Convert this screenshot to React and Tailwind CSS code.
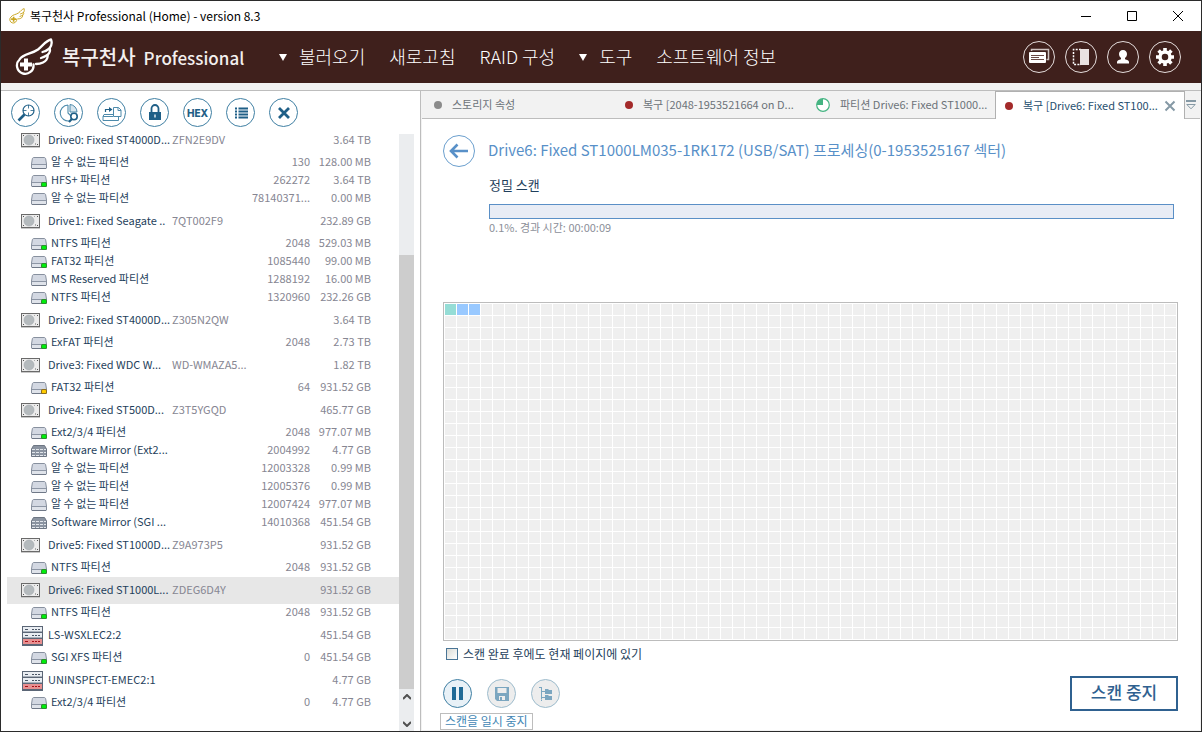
import React from "react";

const DRIVES = [
  { name: "Drive0: Fixed ST4000D...", serial: "ZFN2E9DV", size: "3.64 TB", parts: [
    ["plain", "알 수 없는 파티션", "130", "128.00 MB"],
    ["green", "HFS+ 파티션", "262272", "3.64 TB"],
    ["plain", "알 수 없는 파티션", "78140371...", "0.00 MB"],
  ] },
  { name: "Drive1: Fixed Seagate ..", serial: "7QT002F9", size: "232.89 GB", parts: [
    ["green", "NTFS 파티션", "2048", "529.03 MB"],
    ["green", "FAT32 파티션", "1085440", "99.00 MB"],
    ["plain", "MS Reserved 파티션", "1288192", "16.00 MB"],
    ["green", "NTFS 파티션", "1320960", "232.26 GB"],
  ] },
  { name: "Drive2: Fixed ST4000D...", serial: "Z305N2QW", size: "3.64 TB", parts: [
    ["green", "ExFAT 파티션", "2048", "2.73 TB"],
  ] },
  { name: "Drive3: Fixed WDC W...", serial: "WD-WMAZA5...", size: "1.82 TB", parts: [
    ["yellow", "FAT32 파티션", "64", "931.52 GB"],
  ] },
  { name: "Drive4: Fixed ST500D...", serial: "Z3T5YGQD", size: "465.77 GB", parts: [
    ["green", "Ext2/3/4 파티션", "2048", "977.07 MB"],
    ["mirror", "Software Mirror (Ext2...", "2004992", "4.77 GB"],
    ["plain", "알 수 없는 파티션", "12003328", "0.99 MB"],
    ["plain", "알 수 없는 파티션", "12005376", "0.99 MB"],
    ["plain", "알 수 없는 파티션", "12007424", "977.07 MB"],
    ["mirror", "Software Mirror (SGI ...", "14010368", "451.54 GB"],
  ] },
  { name: "Drive5: Fixed ST1000D...", serial: "Z9A973P5", size: "931.52 GB", parts: [
    ["green", "NTFS 파티션", "2048", "931.52 GB"],
  ] },
  { name: "Drive6: Fixed ST1000L...", serial: "ZDEG6D4Y", size: "931.52 GB", selected: true, parts: [
    ["green", "NTFS 파티션", "2048", "931.52 GB"],
  ] },
  { name: "LS-WSXLEC2:2", serial: "", size: "451.54 GB", server: true, parts: [
    ["green", "SGI XFS 파티션", "0", "451.54 GB"],
  ] },
  { name: "UNINSPECT-EMEC2:1", serial: "", size: "4.77 GB", server: true, parts: [
    ["green", "Ext2/3/4 파티션", "0", "4.77 GB"],
  ] },
];

const CELL_COUNT = 61 * 28;
const CELL_COLORS = ["bg-[#95ddd6]", "bg-[#99c9ff]", "bg-[#99c9ff]"];

function Wing({ className }) {
  return (
    <svg viewBox="0 0 38 38" className={className} fill="none" stroke="currentColor" aria-hidden="true">
      <path d="M18.5 26.500A8.300 8.300 0 1 1 4.500 21.500C8 15.500 17 16 23 11.500C28 7.500 31 2.500 36 1.500C37 4 36.500 8 34.500 10.500C35.500 12 35 15 32.500 17C33 20 31 23 28 24.500C26 25.500 23.500 26 21 26" strokeWidth="2.300" strokeLinejoin="round" strokeLinecap="round" />
      <path d="M34.500 10.500C32 12.500 29.500 13.500 27.500 14M32.500 17C30 18.500 28 19.500 26 20" strokeWidth="2.300" strokeLinecap="round" />
      <path d="M11 20.500v12M5 26.500h12" strokeWidth="4" />
    </svg>
  );
}

function DriveIcon() {
  return (
    <svg width="19" height="15" viewBox="0 0 19 15" aria-hidden="true">
      <path d="M0 14h19v1H0z" fill="#c9c9c9" />
      <rect x=".5" y=".5" width="18" height="13" fill="#ececec" stroke="#6a6a6a" />
      <circle cx="8" cy="7" r="5" fill="#b4babd" stroke="#a2a8ac" strokeWidth=".6" />
      <path d="M2 2h1v1H2zM16 2h1v1h-1zM2 11h1v1H2zM16 11h1v1h-1z" fill="#555" />
      <path d="M13 2h1v1h-1zM14 10h1v2h-1z" fill="#aaa" />
    </svg>
  );
}

function ServerIcon() {
  return (
    <svg width="22" height="20" viewBox="-1 0 22 20" aria-hidden="true">
      <rect width="21" height="20" fill="#5b6676" />
      <path d="M1 1h19v5H1zM1 7h19v5H1z" fill="#e9edf2" />
      <path d="M1 13h19v5H1z" fill="#e89090" />
      <path d="M3 3h3v1H3zM10 3h2v1h-2zM13 3h2v1h-2zM16 3h2v1h-2zM3 9h3v1H3zM10 9h2v1h-2zM13 9h2v1h-2zM16 9h2v1h-2z" fill="#4b5666" />
      <path d="M3 15h3v1H3zM10 15h2v1h-2zM13 15h2v1h-2zM16 15h2v1h-2z" fill="#a60f18" />
      <path d="M1 5h19v1H1zM1 11h19v1H1z" fill="#a8b0bb" />
    </svg>
  );
}

function PartitionIcon({ kind }) {
  if (kind === "mirror") {
    return (
      <svg width="16" height="12" viewBox="0 0 16 12" aria-hidden="true">
        <path d="M2.500.5h11L15.500 4v7.500H.5V4z" fill="#8b94a1" stroke="#6d7683" />
        <path d="M1 4.500h14M1 7.500h14M1 10.500h14" stroke="#e2e6eb" strokeDasharray="3 1" />
      </svg>
    );
  }
  const led = kind === "green" ? "#00ee0c" : kind === "yellow" ? "#ffcc00" : null;
  const ring = kind === "green" ? "#2c8f2c" : "#8f6f1c";
  return (
    <svg width="16" height="12" viewBox="0 0 16 12" aria-hidden="true">
      <path d="M3 .5h10c1 0 1.500.5 1.700 1.500l.8 5v4c0 .3-.3.5-1 .5h-13c-.7 0-1-.2-1-.5V7l.8-5C1.500 1 2 .5 3 .5z" fill="#d3d8e2" stroke="#87909e" />
      <path d="M1 8h14v3H1z" fill="#dfe3ea" />
      <path d="M1 7.500h14" stroke="#8d96a5" />
      <path d="M1 11.500h14" stroke="#6f7887" />
      {led && <rect x="10" y="7" width="6" height="5" rx="1.500" fill={ring} />}
      {led && <rect x="11" y="8" width="4" height="3" rx=".5" fill={led} />}
    </svg>
  );
}

function HeaderButton({ label, children }) {
  return (
    <button aria-label={label} className="flex size-8 items-center justify-center rounded-full border border-[#e4dcdb] text-white">
      <svg width="24" height="24" viewBox="0 0 24 24" fill="none" stroke="currentColor" aria-hidden="true">{children}</svg>
    </button>
  );
}

function ToolButton({ label, children }) {
  return (
    <button aria-label={label} className="flex size-[29px] shrink-0 items-center justify-center rounded-full border border-[#3f7fa3] text-[#1f5f87]">
      {children}
    </button>
  );
}

function ToolSvg({ children }) {
  return <svg width="22" height="22" viewBox="0 0 22 22" fill="none" stroke="currentColor" aria-hidden="true">{children}</svg>;
}

function TitleBar() {
  return (
    <div className="flex h-[30px] items-center bg-white pl-2 text-black">
      <Wing className="size-4 text-[#c9a51e]" />
      <span className="ml-[5px] pb-px text-[12px] leading-4">복구천사 Professional (Home) - version 8.3</span>
      <div className="ml-auto flex">
        <button aria-label="최소화" className="flex h-[30px] w-[46px] items-center justify-center">
          <svg width="10" height="10" viewBox="0 0 10 10" stroke="#000"><path d="M0 5.500h10" /></svg>
        </button>
        <button aria-label="최대화" className="flex h-[30px] w-[46px] items-center justify-center">
          <svg width="10" height="10" viewBox="0 0 10 10" fill="none" stroke="#000"><path d="M.5.5h9v9h-9z" /></svg>
        </button>
        <button aria-label="닫기" className="flex h-[30px] w-[46px] items-center justify-center">
          <svg width="10" height="10" viewBox="0 0 10 10" stroke="#000"><path d="M0 0l10 10M10 0L0 10" /></svg>
        </button>
      </div>
    </div>
  );
}

function MenuItem({ arrow, children }) {
  return (
    <button className="flex items-center gap-3 whitespace-nowrap">
      {arrow && <svg width="8" height="7" viewBox="0 0 8 7" fill="currentColor" aria-hidden="true"><path d="M0 0h8L4 7z" /></svg>}
      <span className="pb-0.5">{children}</span>
    </button>
  );
}

function Header() {
  return (
    <header className="flex h-[52px] items-center bg-[#3f201c] pl-[14px] pr-5 text-white">
      <Wing className="size-[38px]" />
      <h1 className="ml-[9px] flex w-[217px] items-baseline gap-2 whitespace-nowrap text-[20px] font-medium leading-7 text-[#f3efee]">
        복구천사 <span className="text-[17px]">Professional</span>
      </h1>
      <nav className="flex items-center gap-6 text-[18px] font-light leading-6">
        <MenuItem arrow>불러오기</MenuItem>
        <MenuItem>새로고침</MenuItem>
        <MenuItem>RAID 구성</MenuItem>
        <MenuItem arrow>도구</MenuItem>
        <MenuItem>소프트웨어 정보</MenuItem>
      </nav>
      <div className="ml-auto flex gap-[10px]">
        <HeaderButton label="메시지">
          <path d="M4.500 6V4.500h17v10h-2" strokeWidth="1.500" stroke="#cfc4c2" />
          <rect x="2" y="7" width="17" height="11" rx="1" fill="currentColor" stroke="none" />
          <path d="M4 10.500h13M4 12.500h8M4 14.500h13" stroke="#6b4a46" />
        </HeaderButton>
        <HeaderButton label="패널">
          <path d="M12 4.500H4.500v15H12" strokeWidth="1.500" strokeDasharray="2 1.300" />
          <path d="M11 4h9v16h-9z" fill="#e9e2e1" stroke="none" />
        </HeaderButton>
        <HeaderButton label="사용자">
          <path d="M12 5c2.500 0 4 1.700 4 4 0 2-1 3.300-2 4v1.200c2 .6 4 1.300 4 2.800v1.500H6V17c0-1.500 2-2.200 4-2.800V13c-1-.7-2-2-2-4 0-2.300 1.500-4 4-4z" fill="currentColor" stroke="none" />
        </HeaderButton>
        <HeaderButton label="설정">
          <circle cx="12" cy="12" r="5" strokeWidth="3.500" />
          <path d="M12 3v3.500M12 17.500V21M3 12h3.500M17.500 12H21M5.600 5.600l2.500 2.500M15.900 15.900l2.500 2.500M18.400 5.600l-2.500 2.500M8.100 15.900l-2.500 2.500" strokeWidth="3.600" />
        </HeaderButton>
      </div>
    </header>
  );
}

function Toolbar() {
  return (
    <div className="flex h-[43px] shrink-0 items-center gap-[14px] pl-[10px]">
      <ToolButton label="검색">
        <ToolSvg>
          <circle cx="13.500" cy="8.500" r="5.500" strokeWidth="1.200" />
          <path d="M13.500 3v3.500M13.500 10.500V14M8 8.500h3.500M15.500 8.500H19" strokeWidth=".8" />
          <path d="M9.500 12.500L3.500 18.500" strokeWidth="2.600" />
        </ToolSvg>
      </ToolButton>
      <ToolButton label="파티션 검색">
        <ToolSvg>
          <path d="M10 3A8 8 0 1 0 12 18.800M10 3v8l5 5M10 3" strokeWidth="1.100" stroke="#4d8aab" />
          <path d="M12 2.500a7.500 7.500 0 0 1 7 7.500h-7z" fill="#d6e5ee" strokeWidth="1" stroke="#4d8aab" />
          <circle cx="16" cy="14.500" r="3.200" fill="#fff" strokeWidth="1.600" />
          <path d="M13.800 17l-2.800 3" strokeWidth="2.200" />
        </ToolSvg>
      </ToolButton>
      <ToolButton label="이미지 저장">
        <ToolSvg>
          <path d="M12.500 5.500h5l2.500 2.500v6.500h-7.500zM17 5.500v3h3" stroke="#4d8aab" />
          <path d="M3 12.500h9M3 12.500l-1 2v4h15.500V15M2 14.500h10" stroke="#4d8aab" />
          <path d="M4.500 10V7.500H9" strokeWidth="1.200" />
          <path d="M8 5l3.500 2.500L8 10z" fill="currentColor" stroke="none" />
        </ToolSvg>
      </ToolButton>
      <ToolButton label="잠금">
        <ToolSvg>
          <path d="M7.500 10V6.500a3.500 3.500 0 0 1 7 0V10" strokeWidth="1.800" />
          <path d="M5 10h12v8H5z" fill="currentColor" stroke="none" />
          <path d="M11 12.500v3" stroke="#fff" strokeWidth="1.300" />
        </ToolSvg>
      </ToolButton>
      <ToolButton label="16진수 보기">
        <span className="font-[Inter,sans-serif] text-[10px] font-extrabold leading-none">HEX</span>
      </ToolButton>
      <ToolButton label="목록">
        <ToolSvg>
          <path d="M5 6.500h2M5 9.500h2M5 12.500h2M5 15.500h2M8.500 6.500H18M8.500 9.500H18M8.500 12.500H18M8.500 15.500H18" strokeWidth="2" />
        </ToolSvg>
      </ToolButton>
      <ToolButton label="닫기">
        <ToolSvg><path d="M6 6l10 10M16 6L6 16" strokeWidth="2.800" /></ToolSvg>
      </ToolButton>
    </div>
  );
}

function DriveTree() {
  return (
    <div className="min-w-0 flex-1 pl-[6px]">
      <table className="-mt-[7px] w-full table-fixed border-collapse whitespace-nowrap text-[11px] leading-[14px] text-[#868692]">
        <colgroup>
          <col className="w-[165px]" />
          <col className="w-[78px]" />
          <col className="w-[60px]" />
          <col />
        </colgroup>
        {DRIVES.map((d) => (
          <tbody key={d.name}>
            <tr className={d.selected ? "h-[27px] bg-[#e7e7e7]" : "h-[27px]"}>
              <td className="p-0">
                <div className="flex items-center pl-[14px] text-[#1f3f5c]">
                  <span className="flex w-[27px]">{d.server ? <ServerIcon /> : <DriveIcon />}</span>
                  <span className="pb-1">{d.name}</span>
                </div>
              </td>
              <td className="p-0 pb-1">{d.serial}</td>
              <td className="p-0" />
              <td className="p-0 pb-1 pr-7 text-right">{d.size}</td>
            </tr>
            {d.parts.map((p) => (
              <tr key={p[2]} className="h-[18px]">
                <td className="p-0">
                  <div className="flex items-center gap-1 pl-6 text-[#1f3f5c]">
                    <PartitionIcon kind={p[0]} />
                    <span className="pb-1">{p[1]}</span>
                  </div>
                </td>
                <td className="p-0" />
                <td className="p-0 pb-1 text-right">{p[2]}</td>
                <td className="p-0 pb-1 pr-7 text-right">{p[3]}</td>
              </tr>
            ))}
          </tbody>
        ))}
      </table>
    </div>
  );
}

function Scrollbar() {
  return (
    <div className="mr-[6px] flex w-[15px] shrink-0 flex-col bg-[#ebedef]">
      <div className="grow-[121]" />
      <div className="grow-[434] bg-[#cdcdcd]" />
      <button aria-label="위로" className="flex h-[15px] items-center justify-center">
        <svg width="8" height="6" viewBox="0 0 8 6" fill="none" stroke="#505050" strokeWidth="2"><path d="M0 5l4-4 4 4" /></svg>
      </button>
      <div className="h-3" />
      <button aria-label="아래로" className="flex h-[15px] items-center justify-center">
        <svg width="8" height="6" viewBox="0 0 8 6" fill="none" stroke="#505050" strokeWidth="2"><path d="M0 1l4 4 4-4" /></svg>
      </button>
    </div>
  );
}

function Tab({ mark, children }) {
  return (
    <button role="tab" aria-selected="false" className="flex min-w-0 flex-1 items-center gap-[10px] whitespace-nowrap border-b border-[#bdbdbd] pl-3 text-[#6c7379]">
      {mark}
      <span className="pb-px">{children}</span>
    </button>
  );
}

function TabBar() {
  return (
    <div role="tablist" className="flex h-7 bg-[#f2f2f2] text-[11px] leading-4">
      <Tab mark={<span className="size-2 rounded-full bg-[#8b8b8b]" />}>스토리지 속성</Tab>
      <Tab mark={<span className="size-2 rounded-full bg-[#a32a2a]" />}>복구 [2048-1953521664 on D...</Tab>
      <Tab
        mark={
          <svg width="14" height="14" viewBox="0 0 14 14" className="shrink-0" aria-hidden="true">
            <circle cx="7" cy="7" r="6.300" fill="#fff" stroke="#45b482" strokeWidth="1.200" />
            <path d="M7 7V.7A6.300 6.300 0 0 0 .7 7z" fill="#45b482" />
          </svg>
        }
      >
        파티션 Drive6: Fixed ST1000...
      </Tab>
      <div className="flex w-[190px] shrink-0 items-center border-x border-t border-[#b0b0b0] bg-white pl-[9px] pr-2 text-[#1f4e6e]">
        <button role="tab" aria-selected="true" className="flex min-w-0 flex-1 items-center gap-[10px] whitespace-nowrap">
          <span className="size-2 rounded-full bg-[#a32a2a]" />
          <span className="pb-0.5">복구 [Drive6: Fixed ST100...</span>
        </button>
        <button aria-label="탭 닫기">
          <svg width="12" height="12" viewBox="0 0 12 12" stroke="#8599a5" strokeWidth="2"><path d="M1.500 1.500l9 9M10.500 1.500l-9 9" /></svg>
        </button>
      </div>
      <button aria-label="탭 목록" className="flex w-[15px] shrink-0 items-center border-b border-[#bdbdbd] pl-px">
        <svg width="10" height="10" viewBox="0 0 10 10" fill="none" stroke="#8599a5"><path d="M0 1h10" strokeWidth="2" /><path d="M.8 4.500h8.400L5 8.800z" /></svg>
      </button>
    </div>
  );
}

function ScanActions() {
  return (
    <div className="flex items-start justify-between">
      <div className="flex gap-[15px] pt-[3px]">
        <div className="relative">
          <button aria-label="스캔을 일시 중지" className="flex size-[29px] items-center justify-center rounded-full border border-[#3f7fa3] bg-[#e8f1f7]">
            <svg width="11" height="13" viewBox="0 0 11 13" fill="#1f6a96"><path d="M0 0h4v13H0zM7 0h4v13H7z" /></svg>
          </button>
          <div role="tooltip" className="absolute -left-[3px] top-[34px] whitespace-nowrap border border-[#bdbdbd] bg-white px-1 pb-px text-[12px] leading-[14px] text-[#4287b5]">
            스캔을 일시 중지
          </div>
        </div>
        <button aria-label="저장" className="flex size-[29px] items-center justify-center rounded-full border border-[#9dbccd] bg-[#ededed]">
          <svg width="14" height="14" viewBox="0 0 14 14"><path d="M0 0h14v14H2l-2-2z" fill="#7ba6c0" /><path d="M2.500 1h9v5h-9zM4 9h6v4H4z" fill="#ededed" /><path d="M5 10h2v4H5z" fill="#7ba6c0" /></svg>
        </button>
        <button aria-label="트리 보기" className="flex size-[29px] items-center justify-center rounded-full border border-[#9dbccd] bg-[#ededed]">
          <svg width="14" height="14" viewBox="0 0 14 14" fill="#7ba6c0"><path d="M0 0h3v1H0zM2 1h1v11H2zM2 12.500h1V14H2zM3 4h3v1H3zM3 10h3v1H3zM6 2h3l1 1h3v4H6zM6 8h3l1 1h3v4H6z" /></svg>
        </button>
      </div>
      <button className="h-[35px] w-[108px] border-2 border-[#2f6190] pb-1 text-[17px] font-medium leading-5 text-[#2f6190]">스캔 중지</button>
    </div>
  );
}

function ScanPage() {
  return (
    <main className="flex-1 bg-white pb-[18px] pl-[21px] pr-[22px] pt-4">
      <div className="flex items-center gap-[13px]">
        <button aria-label="뒤로" className="flex size-8 shrink-0 items-center justify-center rounded-full border border-[#6b9fce] text-[#5890c8]">
          <svg width="20" height="16" viewBox="0 0 20 16" fill="none" stroke="currentColor" strokeWidth="2.600"><path d="M1.500 8H19M8.500 1.500L2 8l6.500 6.500" /></svg>
        </button>
        <h2 className="pb-0.5 text-[15px] leading-6 text-[#5890c8]">Drive6: Fixed ST1000LM035-1RK172 (USB/SAT) 프로세싱(0-1953525167 섹터)</h2>
      </div>
      <div className="pl-[46px] pr-1">
        <p className="mt-2 text-[13px] leading-5 text-[#1f3f5c]">정밀 스캔</p>
        <div role="progressbar" aria-label="정밀 스캔" aria-valuenow="0.1" className="mt-[9px] h-[15px] border border-[#5a8fc6] bg-[#e8ecf5]" />
        <p className="text-[11px] leading-4 text-[#8c8f99]">0.1%. 경과 시간: 00:00:09</p>
      </div>
      <div className="mt-[67px] grid grid-cols-[repeat(auto-fill,11px)] auto-rows-[11px] gap-px border border-[#bcbcbc] p-px">
        {Array.from({ length: CELL_COUNT }, (_, i) => (
          <div key={i} className={CELL_COLORS[i] || "bg-[#efefef]"} />
        ))}
      </div>
      <label className="mt-1 flex items-center gap-[5px] pl-[3px] text-[12px] leading-[18px] text-[#1f3f5c]">
        <input type="checkbox" className="size-3 appearance-none border border-[#4a7596] bg-linear-to-br from-[#dcdcd6] to-white" />
        스캔 완료 후에도 현재 페이지에 있기
      </label>
      <div className="mt-[13px]"><ScanActions /></div>
    </main>
  );
}

export default function App() {
  return (
    <div className="flex min-h-screen flex-col border border-[#2b2b2b] bg-[#f2f2f2] font-['Noto_Sans_CJK_KR',sans-serif]">
      <TitleBar />
      <Header />
      <div className="mt-[7px] flex flex-1 border-t border-[#bdbdbd]">
        <aside className="flex w-[420px] shrink-0 flex-col border-r border-[#bdbdbd] bg-white">
          <Toolbar />
          <div className="flex flex-1">
            <DriveTree />
            <Scrollbar />
          </div>
        </aside>
        <div className="flex min-w-0 flex-1 flex-col pb-px pl-px pr-px">
          <TabBar />
          <ScanPage />
        </div>
      </div>
    </div>
  );
}
